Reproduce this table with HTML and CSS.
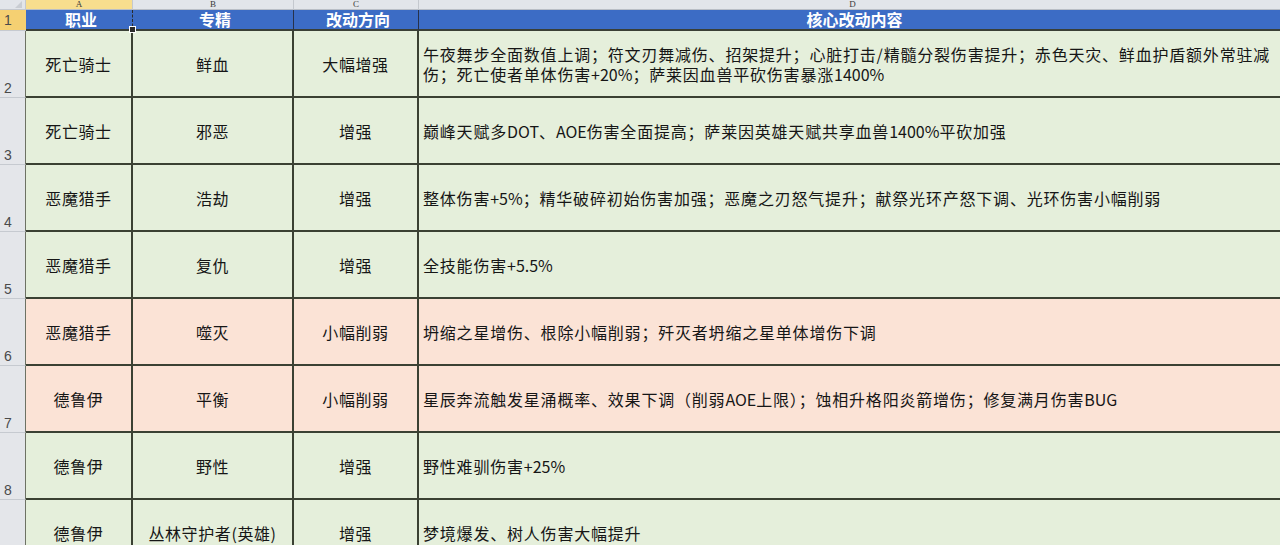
FILE: index.html
```html
<!DOCTYPE html>
<html lang="zh-CN">
<head>
<meta charset="utf-8">
<title>职业改动</title>
<link rel="stylesheet" href="styles.css">
</head>
<body>
<div class="sheet">
  <div class="corner"><span class="tri"></span></div>
  <div class="colhead sel">A</div>
  <div class="colhead">B</div>
  <div class="colhead">C</div>
  <div class="colhead">D</div>

  <div class="rownum sel">1</div>
  <div class="hdr a1">职业<span class="handle"></span></div>
  <div class="hdr">专精</div>
  <div class="hdr">改动方向</div>
  <div class="hdr">核心改动内容</div>

  <div class="rownum">2</div>
  <div class="cell c g">死亡骑士</div>
  <div class="cell c g">鲜血</div>
  <div class="cell c g">大幅增强</div>
  <div class="cell d g"><p class="txt">午夜舞步全面数值上调；符文刃舞减伤、招架提升；心脏打击/精髓分裂伤害提升；赤色天灾、鲜血护盾额外常驻减<br>伤；死亡使者单体伤害<span class="en">+20%</span>；萨莱因血兽平砍伤害暴涨<span class="en">1400%</span></p></div>

  <div class="rownum">3</div>
  <div class="cell c g">死亡骑士</div>
  <div class="cell c g">邪恶</div>
  <div class="cell c g">增强</div>
  <div class="cell d g"><p class="txt">巅峰天赋多<span class="en">DOT</span>、<span class="en">AOE</span>伤害全面提高；萨莱因英雄天赋共享血兽<span class="en">1400%</span>平砍加强</p></div>

  <div class="rownum">4</div>
  <div class="cell c g">恶魔猎手</div>
  <div class="cell c g">浩劫</div>
  <div class="cell c g">增强</div>
  <div class="cell d g"><p class="txt">整体伤害<span class="en">+5%</span>；精华破碎初始伤害加强；恶魔之刃怒气提升；献祭光环产怒下调、光环伤害小幅削弱</p></div>

  <div class="rownum">5</div>
  <div class="cell c g">恶魔猎手</div>
  <div class="cell c g">复仇</div>
  <div class="cell c g">增强</div>
  <div class="cell d g"><p class="txt">全技能伤害<span class="en">+5.5%</span></p></div>

  <div class="rownum">6</div>
  <div class="cell c p">恶魔猎手</div>
  <div class="cell c p">噬灭</div>
  <div class="cell c p">小幅削弱</div>
  <div class="cell d p"><p class="txt">坍缩之星增伤、根除小幅削弱；歼灭者坍缩之星单体增伤下调</p></div>

  <div class="rownum">7</div>
  <div class="cell c p">德鲁伊</div>
  <div class="cell c p">平衡</div>
  <div class="cell c p">小幅削弱</div>
  <div class="cell d p"><p class="txt">星辰奔流触发星涌概率、效果下调（削弱<span class="en">AOE</span>上限）；蚀相升格阳炎箭增伤；修复满月伤害<span class="en">BUG</span></p></div>

  <div class="rownum">8</div>
  <div class="cell c g">德鲁伊</div>
  <div class="cell c g">野性</div>
  <div class="cell c g">增强</div>
  <div class="cell d g"><p class="txt">野性难驯伤害<span class="en">+25%</span></p></div>

  <div class="rownum">9</div>
  <div class="cell c g">德鲁伊</div>
  <div class="cell c g">丛林守护者(英雄)</div>
  <div class="cell c g">增强</div>
  <div class="cell d g"><p class="txt">梦境爆发、树人伤害大幅提升</p></div>
</div>
</body>
</html>
```

FILE: styles.css
```css
html, body {
  margin: 0;
  padding: 0;
  width: 1280px;
  height: 545px;
  overflow: hidden;
  background: #ffffff;
}

.sheet {
  display: grid;
  grid-template-columns: 26px 107px 161px 125px 868px;
  grid-template-rows: 10px 21px repeat(8, 67px);
  width: 1287px;
  font-family: "Noto Sans CJK SC", "Noto Sans", sans-serif;
  color: #161616;
}

.corner {
  background: #e2e5ea;
  border-right: 1px solid #c4c8ce;
  border-bottom: 1px solid #c4c8ce;
  box-sizing: border-box;
  position: relative;
  overflow: hidden;
}

.tri {
  position: absolute;
  right: 3px;
  bottom: 1px;
  width: 0;
  height: 0;
  border-left: 7px solid transparent;
  border-bottom: 7px solid #c9cdd3;
}

.colhead {
  background: #e2e5ea;
  border-right: 1px solid #c4c8ce;
  border-bottom: 1px solid #b9bec6;
  box-sizing: border-box;
  display: flex;
  justify-content: center;
  align-items: center;
  font-family: "Liberation Serif", serif;
  font-size: 9px;
  line-height: 9px;
  color: #3a3a3a;
}

.colhead.sel {
  background: #f8de8e;
}

.rownum {
  background: #e4e6ea;
  border-bottom: 1px solid #c6cad0;
  border-right: 1px solid #6d7264;
  box-sizing: border-box;
  display: flex;
  align-items: flex-end;
  padding: 0 0 1px 4px;
  font-family: "Liberation Sans", sans-serif;
  font-size: 14px;
  line-height: 16px;
  color: #4a4a4a;
}

.rownum.sel {
  background: #f5d072;
  border-right: none;
  padding-bottom: 2px;
}

.hdr {
  background: #3c6cc5;
  color: #ffffff;
  font-weight: bold;
  font-size: 16px;
  line-height: 19px;
  text-align: center;
  border-right: 1px solid #27324a;
  border-bottom: 2px solid #3a3f36;
  box-sizing: border-box;
  white-space: nowrap;
  padding-left: 4px;
}

.hdr.a1 {
  position: relative;
  border-right: 1px dashed #2a2a2a;
}

.handle {
  position: absolute;
  right: -4px;
  bottom: -4px;
  width: 5px;
  height: 5px;
  background: #2a2a2a;
  border: 1px solid #ffffff;
  z-index: 2;
}

.cell {
  border-right: 2px solid #3b4133;
  border-bottom: 2px solid #3b4133;
  box-sizing: border-box;
  font-size: 16px;
  line-height: 20px;
  display: flex;
  align-items: center;
  overflow: hidden;
}

.cell.c {
  justify-content: center;
  letter-spacing: 0.6px;
  white-space: nowrap;
}

.cell.d {
  justify-content: flex-start;
  padding-left: 4px;
  letter-spacing: 0.8px;
  white-space: nowrap;
}

.txt {
  margin: 0;
}

.en {
  letter-spacing: 0;
}

.g {
  background: #e5efdb;
}

.p {
  background: #fbe3d6;
}
```
